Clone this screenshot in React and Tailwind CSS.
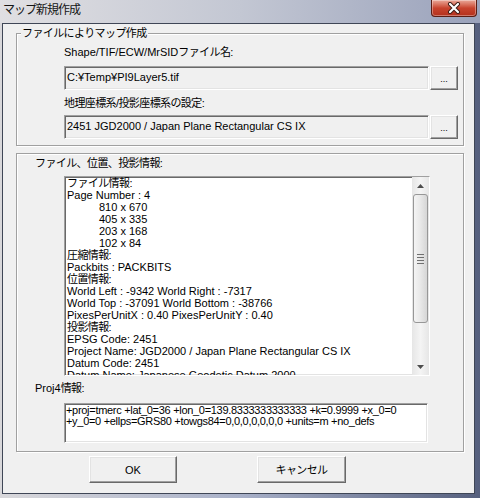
const UI = "font-['Liberation_Sans','Noto_Sans_CJK_JP',sans-serif] text-[11px] leading-[14px] text-black";

const SUNKEN =
    "border border-t-[#a0a0a0] border-l-[#a0a0a0] border-b-white border-r-white shadow-[inset_1px_1px_0_#696969,inset_-1px_-1px_0_#e3e3e3]";
const RAISED =
    "border border-t-white border-l-white border-b-[#696969] border-r-[#696969] shadow-[inset_-1px_-1px_0_#a0a0a0,inset_1px_1px_0_#e3e3e3] bg-[#f0f0f0]";
const GROUP = "border border-[#a0a0a0] shadow-[inset_1px_1px_0_#fff,1px_1px_0_#fff]";

// Japanese glyphs run a little narrower in the original UI font
const J = ({ children }) => <span className="tracking-[-0.6px]">{children}</span>;

const INFO_LINES = [
    { text: "ファイル情報:", jp: true },
    { text: "Page Number : 4" },
    { text: "810 x 670", indent: true },
    { text: "405 x 335", indent: true },
    { text: "203 x 168", indent: true },
    { text: "102 x 84", indent: true },
    { text: "圧縮情報:", jp: true },
    { text: "Packbits : PACKBITS" },
    { text: "位置情報:", jp: true },
    { text: "World Left : -9342 World Right : -7317" },
    { text: "World Top : -37091 World Bottom : -38766" },
    { text: "PixesPerUnitX : 0.40 PixesPerUnitY : 0.40" },
    { text: "投影情報:", jp: true },
    { text: "EPSG Code: 2451" },
    { text: "Project Name: JGD2000 / Japan Plane Rectangular CS IX" },
    { text: "Datum Code: 2451" },
    { text: "Datum Name: Japanese Geodetic Datum 2000" },
];

const CloseButton = () => (
    <div className="mr-[3px] w-[46px] h-[17px] rounded-b-[4px] border border-t-0 border-[#5b1d14] bg-linear-to-b from-[#e9a89a] via-[#c8432e] to-[#b3301c] flex items-center justify-center shadow-[inset_0_0_0_1px_rgba(255,255,255,0.35)]">
        <svg width="14" height="12" viewBox="0 0 14 12">
            <path d="M3 2 L11 10 M11 2 L3 10" stroke="#3a1a14" strokeWidth="4" strokeLinecap="round" />
            <path d="M3 2 L11 10 M11 2 L3 10" stroke="#ffffff" strokeWidth="2.2" strokeLinecap="round" />
        </svg>
    </div>
);

const FieldRow = ({ value }) => (
    <div className="flex items-start">
        <div className={`${SUNKEN} w-[365px] h-[24px] bg-[#f0f0f0] pl-[2px] pt-[3px] whitespace-nowrap overflow-hidden`}>
            {value}
        </div>
        <button className={`${RAISED} ml-[1px] w-[28px] h-[24px] flex items-end justify-center pb-[5px] text-[9px] leading-[10px]`}>
            ...
        </button>
    </div>
);

const ScrollBar = () => (
    <div className="w-[17px] flex flex-col bg-linear-to-r from-[#e6e6e6] via-[#f4f4f4] to-[#e6e6e6]">
        <div className="h-[17px] flex items-center justify-center">
            <svg width="7" height="4" viewBox="0 0 7 4">
                <path d="M0 4 L3.5 0 L7 4 Z" fill="#4d4d4d" />
            </svg>
        </div>
        <div className="mx-[1px] h-[129px] rounded-[3px] border border-[#979797] bg-linear-to-r from-[#f4f4f4] via-[#e8e8e8] to-[#d6d6d6] flex flex-col items-center justify-center gap-[2px]">
            <div className="w-[7px] h-[1px] bg-[#707070]" />
            <div className="w-[7px] h-[1px] bg-[#707070]" />
            <div className="w-[7px] h-[1px] bg-[#707070]" />
            <div className="w-[7px] h-[1px] bg-[#707070]" />
        </div>
        <div className="flex-1" />
        <div className="h-[17px] flex items-center justify-center">
            <svg width="7" height="4" viewBox="0 0 7 4">
                <path d="M0 0 L7 0 L3.5 4 Z" fill="#4d4d4d" />
            </svg>
        </div>
    </div>
);

export default function App() {
    return (
        <div className={`${UI} w-[480px] h-[498px] flex flex-col overflow-hidden bg-linear-to-r from-[#d9d8db] via-[#a9b1c9] to-[#56607e]`}>
            {/* title bar */}
            <div className="h-[23px] flex items-start justify-between bg-linear-to-r from-[#e0dfe2] via-[#c3c7d3] to-[#9aa2bb]">
                <span className="pl-[3px] pt-[3px] text-[12px] tracking-[-1px] text-[#151515]">マップ新規作成</span>
                <CloseButton />
            </div>

            {/* client */}
            <div className="ml-[2px] w-[473px] h-[471px] border border-[#3f4656] bg-[#f0f0f0] pl-[13px]">
                {/* group 1 */}
                <div className={`${GROUP} relative mt-[9px] w-[448px] pl-[47px] pt-[11px] pb-[6px]`}>
                    <span className="absolute -top-[8px] left-[4px] px-[1px] bg-[#f0f0f0]">
                        <J>ファイルによりマップ作成</J>
                    </span>
                    <div>Shape/TIF/ECW/MrSID<J>ファイル名</J>:</div>
                    <div className="mt-[7px]">
                        <FieldRow value="C:¥Temp¥PI9Layer5.tif" />
                    </div>
                    <div className="mt-[6px]"><J>地理座標系/投影座標系の設定</J>:</div>
                    <div className="mt-[5px]">
                        <FieldRow value="2451 JGD2000 / Japan Plane Rectangular CS IX" />
                    </div>
                </div>

                {/* group 2 */}
                <div className={`${GROUP} mt-[7px] w-[448px] pt-[2px] pb-[8px]`}>
                    <div className="pl-[18px]"><J>ファイル、位置、投影情報</J>:</div>
                    <div className={`${SUNKEN} mt-[6px] ml-[47px] w-[366px] h-[200px] bg-white flex`}>
                        <div className="flex-1 overflow-hidden pl-[2px] leading-[12px] whitespace-nowrap">
                            {INFO_LINES.map((line, i) => (
                                <div key={i} className={line.indent ? "pl-[32px]" : ""}>
                                    {line.jp ? <J>{line.text}</J> : line.text}
                                </div>
                            ))}
                        </div>
                        <ScrollBar />
                    </div>
                    <div className="pl-[18px] mt-[5px]">Proj4<J>情報</J>:</div>
                    <div className={`${SUNKEN} mt-[8px] ml-[47px] w-[364px] h-[40px] bg-white pl-[1px] pt-[1px] leading-[11px] tracking-[-0.3px] overflow-hidden`}>
                        <div className="whitespace-nowrap">+proj=tmerc +lat_0=36 +lon_0=139.8333333333333 +k=0.9999 +x_0=0</div>
                        <div className="whitespace-nowrap">+y_0=0 +ellps=GRS80 +towgs84=0,0,0,0,0,0,0 +units=m +no_defs</div>
                    </div>
                </div>

                {/* buttons */}
                <div className="mt-[4px] pl-[73px] flex gap-[80px]">
                    <button className={`${RAISED} w-[88px] h-[27px]`}>OK</button>
                    <button className={`${RAISED} w-[89px] h-[27px]`}><J>キャンセル</J></button>
                </div>
            </div>
        </div>
    );
}
